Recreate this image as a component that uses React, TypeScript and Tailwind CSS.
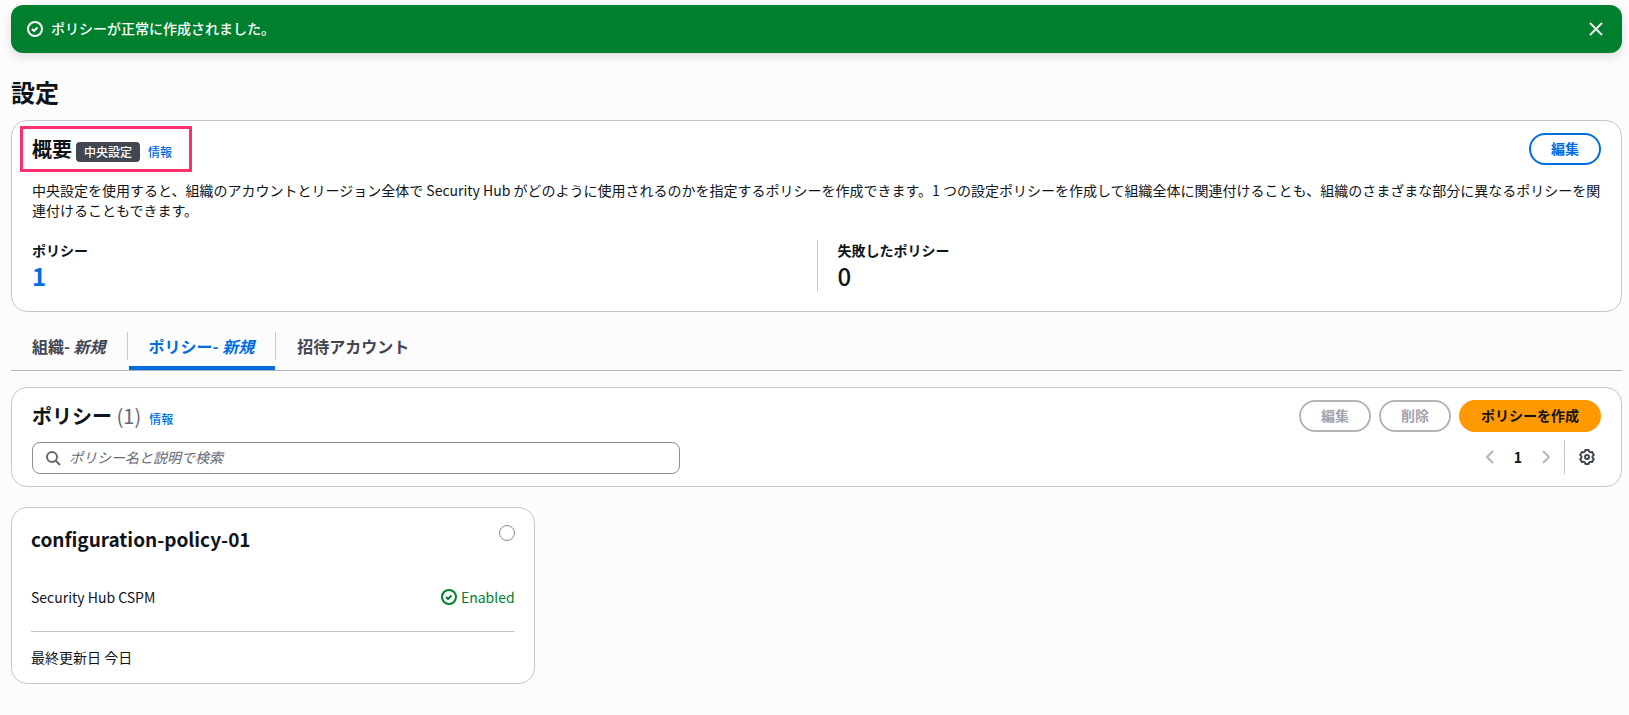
import React, { useState } from 'react';
import clsx from 'clsx';

const tabs = [
    { id: 'org', label: '組織', isNew: true },
    { id: 'policies', label: 'ポリシー', isNew: true },
    { id: 'invited', label: '招待アカウント', isNew: false },
];

const policies = [
    { name: 'configuration-policy-01', service: 'Security Hub CSPM', status: 'Enabled', updated: '最終更新日 今日' },
];

const iconProps = {
    viewBox: '0 0 16 16',
    fill: 'none',
    stroke: 'currentColor',
    strokeWidth: 2,
    strokeLinejoin: 'round' as const,
    className: 'size-4 shrink-0',
    'aria-hidden': true,
};

const CheckCircleIcon = () => (
    <svg {...iconProps}>
        <circle cx="8" cy="8" r="7" />
        <path d="m5 8 2 2 3.521-3.521" />
    </svg>
);

const CloseIcon = () => (
    <svg {...iconProps}>
        <path d="m2 2 12 12M14 2 2 14" />
    </svg>
);

const SearchIcon = () => (
    <svg {...iconProps}>
        <circle cx="7" cy="7" r="5" />
        <path d="m15 15-4.5-4.5" />
    </svg>
);

const AngleLeftIcon = () => (
    <svg {...iconProps}>
        <path d="M11 2 5 8l6 6" />
    </svg>
);

const AngleRightIcon = () => (
    <svg {...iconProps}>
        <path d="m5 2 6 6-6 6" />
    </svg>
);

const SettingsIcon = () => (
    <svg {...iconProps}>
        <path d="M13.33 8c0-.4.9-1.6 1.47-2.1l-1.7-2.9c-.8.25-2.1.05-2.5-.2-.4-.25-.9-1.15-1.05-1.8h-3.1c-.15.65-.65 1.55-1.05 1.8-.4.25-1.7.45-2.5.2L1.2 5.9C1.77 6.4 2.67 7.6 2.67 8s-.9 1.6-1.47 2.1l1.7 2.9c.8-.25 2.1-.05 2.5.2.4.25.9 1.15 1.05 1.8h3.1c.15-.65.65-1.55 1.05-1.8.4-.25 1.7-.45 2.5-.2l1.7-2.9c-.57-.5-1.47-1.7-1.47-2.1z" />
        <circle cx="8" cy="8" r="2" />
    </svg>
);

interface ButtonProps {
    variant: 'normal' | 'primary';
    disabled?: boolean;
    children: React.ReactNode;
}

const Button: React.FC<ButtonProps> = ({ variant, disabled, children }) => (
    <button
        type="button"
        disabled={disabled}
        className={clsx(
            'h-8 rounded-full border-2 px-5 pb-0.5 text-sm leading-5 font-bold whitespace-nowrap',
            variant === 'primary' && 'border-[#ff9900] bg-[#ff9900] text-[#0f141a]',
            variant === 'normal' && !disabled && 'border-[#006ce0] bg-white text-[#006ce0]',
            variant === 'normal' && disabled && 'border-[#b4b4bb] bg-white text-[#a4a4ad]',
        )}
    >
        {children}
    </button>
);

const InfoLink = () => (
    <a href="#info" className="ml-2 text-xs font-medium text-[#006ce0]">情報</a>
);

const App: React.FC = () => {
    const [activeTab, setActiveTab] = useState('policies');
    const [selected, setSelected] = useState<string | null>(null);
    const [query, setQuery] = useState('');

    return (
        <div className="min-h-screen bg-[#fcfcfd] pt-[5px] pr-[7px] pb-4 pl-[11px] font-['Noto_Sans_CJK_JP',sans-serif] text-sm leading-5 text-[#0f141a]" lang="ja">
            {/* Flash message */}
            <div role="status" className="flex h-12 items-center gap-2 rounded-xl bg-[#00802f] px-4 text-white shadow-[0_4px_10px_rgba(0,7,22,0.12)]">
                <CheckCircleIcon />
                <p className="flex-1 pb-0.5 font-medium">ポリシーが正常に作成されました。</p>
                <button type="button" aria-label="閉じる" className="px-0.5 text-[#ebebf0]"><CloseIcon /></button>
            </div>

            <h1 className="mt-[23px] text-2xl leading-8 font-bold">設定</h1>

            {/* Overview */}
            <section className="relative mt-3 rounded-2xl border border-[#c6c6cd] bg-white px-5 pt-3 pb-[19px]">
                <div className="pointer-events-none absolute top-[5px] left-2 h-[46px] w-[172px] border-[3px] border-[#ff2f6c]" />
                <div className="flex items-center justify-between">
                    <div className="flex items-baseline">
                        <h2 className="text-xl leading-8 font-bold">概要</h2>
                        <span className="ml-1 rounded bg-[#424650] px-2 text-xs leading-5 font-medium text-white">中央設定</span>
                        <InfoLink />
                    </div>
                    <Button variant="normal">編集</Button>
                </div>
                <p className="mt-[15px]">
                    中央設定を使用すると、組織のアカウントとリージョン全体で Security Hub がどのように使用されるのかを指定するポリシーを作成できます。1 つの設定ポリシーを作成して組織全体に関連付けることも、組織のさまざまな部分に異なるポリシーを関連付けることもできます。
                </p>
                <dl className="mt-5 grid grid-cols-2">
                    <div>
                        <dt className="font-bold">ポリシー</dt>
                        <dd className="text-2xl leading-8 font-bold"><a href="#policies" className="text-[#006ce0]">1</a></dd>
                    </div>
                    <div className="border-l border-[#c6c6cd] pl-5">
                        <dt className="font-bold">失敗したポリシー</dt>
                        <dd className="text-2xl leading-8 font-medium">0</dd>
                    </div>
                </dl>
            </section>

            {/* Tabs */}
            <div role="tablist" className="mt-4 flex border-b border-[#b4b4bb]">
                {tabs.map((tab, i) => (
                    <div key={tab.id} className="flex items-start">
                        {i > 0 && <div className="mt-1 h-7 w-px bg-[#c6c6cd]" />}
                        <button
                            type="button"
                            role="tab"
                            aria-selected={activeTab === tab.id}
                            onClick={() => setActiveTab(tab.id)}
                            className={clsx(
                                'ml-px h-[42px] border-b-4 pt-0.5 pr-[21px] pb-1 pl-5 text-base leading-7 font-bold',
                                activeTab === tab.id ? 'border-[#006ce0] text-[#006ce0]' : 'border-transparent text-[#424650]',
                            )}
                        >
                            {tab.label}{tab.isNew && <>- <i>新規</i></>}
                        </button>
                    </div>
                ))}
            </div>

            {/* Policy list header */}
            <section className="mt-4 rounded-2xl border border-[#c6c6cd] bg-white px-5 py-3">
                <div className="flex items-center justify-between">
                    <div className="flex items-baseline">
                        <h2 className="text-xl leading-8 font-bold">
                            ポリシー <span className="font-normal text-[#656871]">(1)</span>
                        </h2>
                        <InfoLink />
                    </div>
                    <div className="flex gap-2">
                        <Button variant="normal" disabled>編集</Button>
                        <Button variant="normal" disabled>削除</Button>
                        <Button variant="primary">ポリシーを作成</Button>
                    </div>
                </div>
                <div className="mt-2 flex items-center justify-between">
                    <label className="mt-0.5 flex h-8 w-full max-w-[648px] items-center gap-2 rounded-lg border border-[#8c8c94] px-3 text-[#656871]">
                        <SearchIcon />
                        <input
                            type="search"
                            aria-label="ポリシー名と説明で検索"
                            placeholder="ポリシー名と説明で検索"
                            value={query}
                            onChange={(e) => setQuery(e.target.value)}
                            className="w-full bg-transparent pb-0.5 text-[#0f141a] outline-none placeholder:text-[#656871] placeholder:italic"
                        />
                    </label>
                    <div className="flex items-center">
                        <nav className="flex items-center gap-2" aria-label="ページ">
                            <button type="button" disabled aria-label="前のページ" className="text-[#b4b4bb]"><AngleLeftIcon /></button>
                            <button type="button" aria-current="page" className="w-6 text-center font-bold">1</button>
                            <button type="button" disabled aria-label="次のページ" className="text-[#b4b4bb]"><AngleRightIcon /></button>
                        </nav>
                        <div className="ml-2.5 h-[34px] w-px bg-[#c6c6cd]" />
                        <button type="button" aria-label="設定" className="ml-3.5 mr-1.5 text-[#424650]"><SettingsIcon /></button>
                    </div>
                </div>
            </section>

            {/* Policy cards */}
            <div className="mt-5 grid grid-cols-3 gap-5">
                {policies.map((policy) => (
                    <article key={policy.name} className="rounded-2xl border border-[#c6c6cd] bg-white px-[19px] py-4">
                        <div className="flex items-start justify-between">
                            <h3 className="pt-[3px] text-[19px] leading-6 font-bold">{policy.name}</h3>
                            <input
                                type="radio"
                                name="policy"
                                aria-label={policy.name}
                                checked={selected === policy.name}
                                onChange={() => setSelected(policy.name)}
                                className="mt-px size-4 appearance-none rounded-full border border-[#8c8c94] bg-white checked:border-4 checked:border-[#006ce0]"
                            />
                        </div>
                        <div className="mt-9 flex items-start justify-between border-b border-[#c6c6cd] pb-6">
                            <span>{policy.service}</span>
                            <span className="flex items-center gap-1 text-[#00802f]">
                                <CheckCircleIcon />
                                {policy.status}
                            </span>
                        </div>
                        <p className="mt-[15px]">{policy.updated}</p>
                    </article>
                ))}
            </div>
        </div>
    );
};

export default App;
